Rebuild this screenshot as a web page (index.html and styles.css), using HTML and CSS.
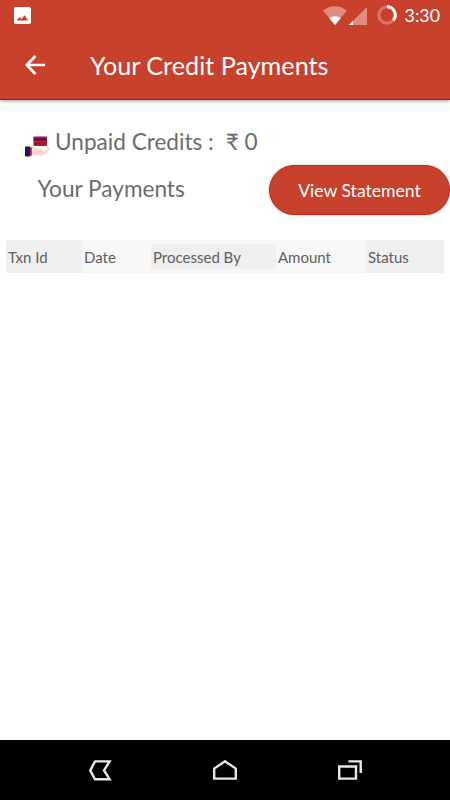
FILE: index.html
```html
<!DOCTYPE html>
<html lang="en">
<head>
<meta charset="utf-8">
<title>Your Credit Payments</title>
<link rel="stylesheet" href="styles.css">
</head>
<body>
<header class="top">
  <div class="status-bar">
    <svg class="picture" width="17" height="17" viewBox="0 0 17 17"><rect width="17" height="17" rx="1.8" fill="#fff"/><path d="M2.7 13.5 5.3 9.9 7.4 12 10.6 8.3 14.1 13.5Z" fill="#c7412d"/></svg>
    <svg class="wifi" width="24" height="19" viewBox="0 0 24 19"><path d="M0 4.5Q12-4 24 4.5L12 19Z" fill="#df8d81"/><path d="M6.2 12Q12 8.4 17.8 12L12 19Z" fill="#fff"/></svg>
    <svg class="signal" width="18" height="18" viewBox="0 0 18 18"><path d="M0 18 18 0V18Z" fill="#df8d81"/><path d="M0 18 4 14V18Z" fill="#fff"/></svg>
    <svg class="battery" width="20" height="20" viewBox="0 0 20 20" fill="none" stroke-width="3"><circle cx="10" cy="10" r="8.2" stroke="#d87569"/><path d="M10 1.8A8.2 8.2 0 0 1 16.3 15.3" stroke="#fff"/></svg>
    <span class="time">3:30</span>
  </div>
  <div class="toolbar">
    <svg class="back" width="21" height="20" viewBox="0 0 21 20" fill="none" stroke="#fff" stroke-width="2.7"><path d="M20.1 10H2M10.4 1 1.8 10 10.4 19"/></svg>
    <h1 class="title">Your Credit Payments</h1>
  </div>
</header>
<main class="content">
  <div class="credits">
    <svg class="hand" width="26" height="21" viewBox="0 0 26 21"><rect x="8.5" y=".5" width="13.5" height="9.5" rx=".7" fill="#b5172b"/><path d="M8.5 2.4H22V4.3H8.5Z" fill="#29166f"/><path d="M10 7.7h6" stroke="#7c1737"/><path d="M6 12C9 10 11 11 13 12.5L17 13Q18.6 14 17 15L20 14.5 23.6 11.9Q25.6 11.8 24.7 13.2L20 18.5Q18.7 19.8 16 19.6L6 19Z" fill="#fbd8cb"/><path d="M12 15.2 17 15" stroke="#f0b9aa" stroke-width=".7"/><path d="M0 10.5H5V20.5H0Z" fill="#171464"/><path d="M5 11.2H6.8V19.8H5Z" fill="#c51f31"/></svg>
    <span class="credits-label">Unpaid Credits :</span>
    <span class="credits-value">₹ 0</span>
  </div>
  <div class="payments">
    <h2 class="payments-label">Your Payments</h2>
    <button class="statement">View Statement</button>
  </div>
  <div class="table-head">
    <span class="cell shaded">Txn Id</span>
    <span class="cell">Date</span>
    <span class="cell shaded short">Processed By</span>
    <span class="cell">Amount</span>
    <span class="cell shaded">Status</span>
  </div>
</main>
<nav class="nav">
  <svg width="24" height="21" viewBox="0 0 24 21" fill="none" stroke="#e8e8e8" stroke-width="2.4"><path d="M7 1.4H21.6L16 10.4 21.6 19.2H7L2.2 10.4Z"/></svg>
  <svg width="24" height="21" viewBox="0 0 24 21" fill="none" stroke="#e8e8e8" stroke-width="2.4"><path d="M1.2 18.6V8.6L12 1.3 22.8 8.6V18.6Z"/></svg>
  <svg width="24" height="21" viewBox="0 0 24 21" fill="none" stroke="#e8e8e8" stroke-width="2.4"><path d="M1.2 6.5H18V18.6H1.2ZM10.4 1.4H22.7V13"/></svg>
</nav>
</body>
</html>
```

FILE: styles.css
```css
* { box-sizing: border-box; }
body {
  margin: 0;
  width: 450px;
  height: 800px;
  display: flex;
  flex-direction: column;
  background: #fff;
  color: #6c6c6c;
  font-family: Lato, "Liberation Sans", sans-serif;
  overflow: hidden;
}
svg { display: block; flex: none; }
h1, h2 { margin: 0; font-weight: 400; }
.top {
  height: 100px;
  background: #c7412d;
  border-bottom: 1px solid #bd1009;
  box-shadow: 0 1px 4px rgba(0, 0, 0, .4);
  color: #fff;
  white-space: nowrap;
}
.status-bar {
  height: 32px;
  display: flex;
  align-items: center;
  padding: 0 10px 2px 14px;
}
.wifi { margin-left: 292px; }
.signal { margin-left: 2px; margin-top: 1px; }
.battery { margin-left: 10px; }
.time { margin-left: auto; font-size: 17.8px; line-height: 22px; margin-top: 0; }
.toolbar {
  height: 66px;
  display: flex;
  align-items: center;
  padding-left: 25px;
}
.title { margin-left: 44px; font-size: 25.2px; line-height: 32px; }
.content { flex: 1; padding-top: 25px; white-space: nowrap; }
.credits {
  height: 34px;
  display: flex;
  align-items: center;
  padding-left: 25px;
  font-size: 22.6px;
}
.hand { margin-top: 8px; }
.credits-label { margin-left: 4px; margin-top: -2px; }
.credits-value { margin-left: 12px; margin-top: -2px; }
.payments {
  height: 62px;
  padding: 6px 0;
  display: flex;
  justify-content: space-between;
  align-items: center;
}
.payments-label { margin: -2px 0 0 37.5px; font-size: 22.6px; line-height: 30px; }
.statement {
  width: 181px;
  height: 50px;
  padding: 2px 0 0;
  border: 1px solid #c4281a;
  border-radius: 25px;
  background: #c7412d;
  box-shadow: 0 0 3px rgba(0, 0, 0, .25);
  color: #fff;
  font: 400 17.6px/24px Lato, sans-serif;
}
.table-head {
  display: grid;
  grid-template-columns: 76px 69px 125px 90px 78px;
  align-items: center;
  width: 438px;
  height: 33px;
  margin: 19px 6px 0;
  background: #f7f7f7;
  color: #606060;
  font-size: 15px;
}
.cell { height: 33px; line-height: 34px; padding-left: 2px; }
.shaded { background: #efefef; }
.short { height: 25px; line-height: 26px; }
.nav {
  height: 60px;
  background: #000;
  display: flex;
  justify-content: center;
  align-items: center;
  gap: 101px;
}
```
